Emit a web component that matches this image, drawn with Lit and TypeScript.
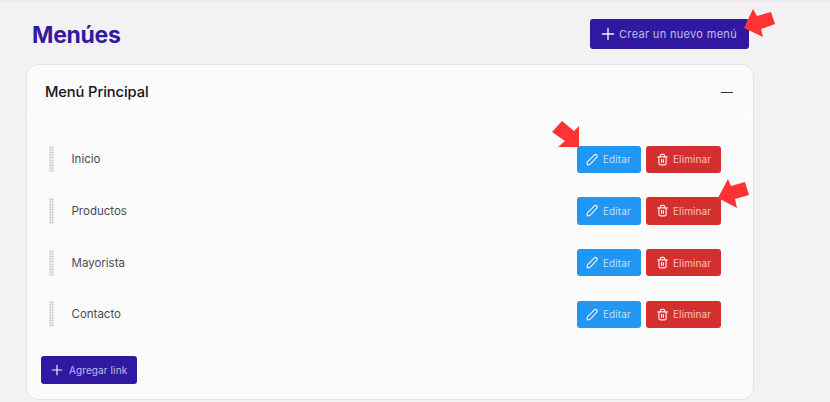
import { LitElement, html, css, svg } from "lit";
import { customElement } from "lit/decorators.js";

const plus = html`<svg class="ico" viewBox="0 0 14 14" fill="none" stroke="currentColor" stroke-width="1.4" stroke-linecap="round"><path d="M7 1.5v11M1.5 7h11"/></svg>`;
const pencil = html`<svg class="ico" viewBox="0 0 14 14" fill="none" stroke="currentColor" stroke-width="1.25" stroke-linejoin="round"><path d="M1.4 12.6c-.3-1.5-.2-2.6.7-3.5L8.8 2.2c.8-.8 2-.9 2.8-.2s.6 2-.2 2.8L4.9 11.8c-.9.9-2 1.1-3.5.8z"/></svg>`;
const trash = html`<svg class="ico" viewBox="0 0 14 14" fill="none" stroke="currentColor" stroke-width="1.3" stroke-linecap="round" stroke-linejoin="round"><path d="M2 4.2h10M4.8 4V2.8c0-.8.5-1.3 1.2-1.3h2c.7 0 1.2.5 1.2 1.3V4M3.1 4.2v6.9c0 1 .6 1.6 1.5 1.6h4.8c.9 0 1.5-.6 1.5-1.6V4.2M6 7v3M8 7v3"/></svg>`;

@customElement("app-root")
export class AppRoot extends LitElement {
  static styles = css`
    :host { display: block; width: 830px; height: 402px; overflow: hidden; position: relative; background: #f3f1f3; font-family: Inter, "Liberation Sans", sans-serif; }
    .strip { height: 2px; background: #ebe9eb; }
    .page { width: 728px; margin-left: 26px; }
    .top { height: 62px; display: flex; justify-content: space-between; align-items: flex-start; padding: 17px 5px 0 6px; box-sizing: border-box; }
    h1 { margin: 1px 0 0; font-size: 23px; line-height: 30px; font-weight: 700; color: #3319a3; letter-spacing: -0.3px; }
    .btn { display: inline-flex; align-items: center; border-radius: 3px; box-sizing: border-box; color: #fff; font-size: 10px; letter-spacing: 0.1px; white-space: nowrap; }
    .ico { display: block; flex: none; }
    .primary { background: #3019a0; color: #c4bcec; }
    .primary .ico { color: #f1effb; }
    .create { width: 159px; height: 30px; padding-left: 11px; gap: 4px; font-size: 11px; letter-spacing: 0.32px; }
    .create .ico { width: 14px; height: 14px; }
    .card { height: 336px; box-sizing: border-box; background: #fbfbfc; border: 1px solid #e4e3e6; border-radius: 12px; overflow: hidden; position: relative; }
    .head { height: 52px; box-sizing: border-box; display: flex; align-items: center; justify-content: space-between; padding: 2px 20px 0 18px; }
    .head span { font-size: 14.7px; font-weight: 500; color: #15141a; letter-spacing: -0.1px; }
    .minus { width: 12px; height: 1px; background: #333; }
    .rows { padding-top: 28.5px; display: flex; flex-direction: column; gap: 24.2px; }
    .row { height: 27.5px; display: flex; align-items: center; padding: 0 32px 0 22px; }
    .grip { width: 5px; height: 26px; flex: none; background-image: radial-gradient(circle, #cfcfd2 0.9px, transparent 1px); background-size: 2.5px 2.6px; }
    .label { margin-left: 17.5px; flex: 1; font-size: 11.5px; color: #4a4a55; }
    .edit { width: 64px; height: 27.5px; background: #2196f3; color: #bfe0fb; padding-left: 9px; gap: 4px; }
    .del { width: 75px; height: 27.5px; margin-left: 5px; background: #d32f2f; color: #f3c3c3; padding-left: 10px; gap: 4px; }
    .edit .ico, .del .ico { width: 13px; height: 13px; color: #eaf5fe; }
    .del .ico { color: #fbeaea; }
    .add { width: 96px; height: 28px; margin: 27.5px 0 0 14px; padding-left: 10px; gap: 6px; }
    .add .ico { width: 12px; height: 12px; }
    .arrows { position: absolute; inset: 0; pointer-events: none; }
    .notch { position: absolute; top: 51px; width: 10px; height: 2px; background: #fff; }
    .notch.l { left: 0; clip-path: polygon(0 0, 100% 100%, 0 100%); }
    .notch.r { right: 0; clip-path: polygon(100% 0, 100% 100%, 0 100%); }
  `;

  render() {
    const items = ["Inicio", "Productos", "Mayorista", "Contacto"];
    return html`
      <div class="strip"></div>
      <div class="page">
        <div class="top">
          <h1>Menúes</h1>
          <div class="btn primary create">${plus}Crear un nuevo menú</div>
        </div>
        <div class="card">
          <div class="notch l"></div><div class="notch r"></div>
          <div class="head"><span>Menú Principal</span><div class="minus"></div></div>
          <div class="rows">
            ${items.map((t) => html`
              <div class="row">
                <div class="grip"></div>
                <div class="label">${t}</div>
                <div class="btn edit">${pencil}Editar</div>
                <div class="btn del">${trash}Eliminar</div>
              </div>`)}
          </div>
          <div class="btn primary add">${plus}Agregar link</div>
        </div>
      </div>
      <svg class="arrows" viewBox="0 0 830 402" fill="#ff3333">
        ${svg`<polygon points="744,28 753,9 757,16 771,12 775,24 761,29 763,37"/>
        <polygon points="718,198 728,179 731,186 745,182 749,195 735,199 737,208"/>
        <polygon points="579,126 574,131 562,121 552,132 565,141 558,147 579,147"/>`}
      </svg>`;
  }
}
